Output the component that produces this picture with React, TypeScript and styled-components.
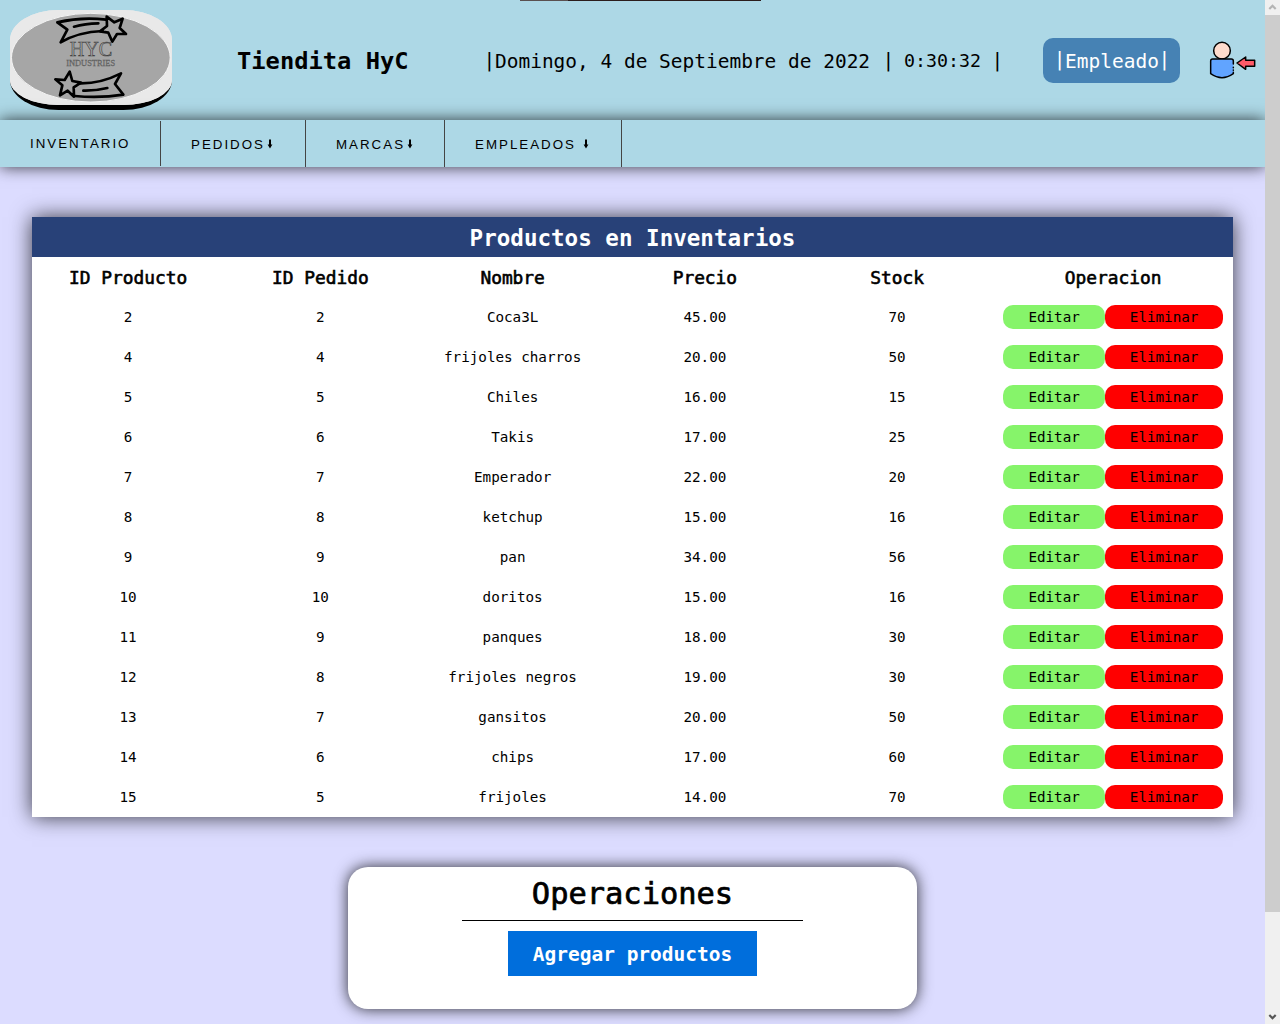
import React from "react";
import styled, { createGlobalStyle } from "styled-components";

const mono = `Consolas, "DejaVu Sans Mono", "Liberation Mono", monospace`;

const GlobalStyle = createGlobalStyle`
  * { box-sizing: border-box; }
  html, body { margin: 0; padding: 0; overflow: hidden; background: #dcdcff; }
`;

const Window = styled.div`
  display: flex;
  width: 1280px;
  height: 1024px;
  overflow: hidden;
  font-family: ${mono};
  color: #000;
`;

const Page = styled.div`
  position: relative;
  flex: 0 0 1265px;
  height: 1024px;
  overflow: hidden;
  background: #dcdcff;
`;

const TopMark = styled.div`
  position: absolute;
  top: 0;
  left: 520px;
  width: 241px;
  height: 1px;
  background: linear-gradient(90deg, #5a5050 48px, #2b1d1d 48px);
`;

const Header = styled.header`
  display: flex;
  align-items: center;
  height: 120px;
  padding: 0 10px;
  background: #add8e6;
  white-space: pre;
`;

const Logo = styled.div`
  flex: none;
  width: 162px;
  height: 100px;
  border-bottom: 5px solid #000;
  border-radius: 30%;
  overflow: hidden;
  background: #e9e9e9;

  svg { display: block; }
`;

const Brand = styled.h1`
  flex: none;
  width: 172px;
  margin: 2px 0 0 65px;
  font-size: 23.75px;
  line-height: 30px;
  font-weight: 700;
`;

const Clock = styled.div`
  flex: none;
  display: flex;
  align-items: center;
  width: 520px;
  margin: 3px 0 0 75px;
  font-size: 18.27px;
  line-height: 30px;
`;

const DateText = styled.span`
  width: 388px;
  font-size: 19.48px;
`;

const TimeText = styled.span`
  width: 98px;
  padding-left: 10px;
  margin-top: -2px;
`;

const Bar = styled.span`
  flex: none;
  width: 11px;
  margin-top: -2px;
  font-size: 19.5px;
  line-height: 30px;
  text-indent: -0.4px;
`;

const Role = styled.div`
  flex: none;
  display: flex;
  align-items: center;
  justify-content: center;
  width: 137px;
  height: 45px;
  padding: 2px 0 0 1px;
  margin-left: 39px;
  border-radius: 10px;
  background: #4682b4;
  color: #fff;
  font-size: 19.48px;
`;

const UserIcon = styled.svg`
  flex: none;
  margin-left: 29px;
`;

const Nav = styled.nav`
  position: relative;
  display: flex;
  align-items: flex-start;
  height: 47px;
  background: #add8e6;
  box-shadow: 0 0 15px rgba(0, 0, 0, 0.75);
`;

const NavItem = styled.a<{ $width: number; $short?: boolean }>`
  display: flex;
  align-items: center;
  width: ${(p) => p.$width}px;
  height: ${(p) => (p.$short ? 45 : 47)}px;
  margin-top: ${(p) => (p.$short ? 1 : 0)}px;
  padding: ${(p) => (p.$short ? 0 : 2)}px 0 0 30px;
  border-right: 1px solid #444;
  font-family: Arial, "Liberation Sans", sans-serif;
  font-size: 13.333px;
  letter-spacing: 2px;
  white-space: pre;

  svg { margin: -1px 0 0 1.5px; }
`;

const TableCard = styled.section`
  width: 1201px;
  margin: 50px 0 0 32px;
  background: #fff;
  box-shadow: 0 0 20px rgba(0, 0, 0, 0.75);
`;

const TableTitle = styled.h2`
  margin: 0;
  height: 40px;
  background: #284178;
  color: #fff;
  font-size: 22.55px;
  line-height: 42px;
  text-align: center;
`;

const Row = styled.div<{ $head?: boolean }>`
  display: grid;
  grid-template-columns: repeat(5, 192.25px) 1fr;
  align-items: center;
  justify-items: center;
  height: 40px;
  font-size: ${(p) => (p.$head ? 17.85 : 14.25)}px;
  -webkit-text-stroke: ${(p) => (p.$head ? "0.6px #000" : "0")};
`;

const Actions = styled.div`
  display: flex;
`;

const ActionButton = styled.button<{ $danger?: boolean }>`
  width: ${(p) => (p.$danger ? 118 : 102)}px;
  height: 24px;
  padding: 0;
  border: 0;
  border-radius: 10px;
  background: ${(p) => (p.$danger ? "#ff0000" : "#86f46a")};
  color: #000;
  font: inherit;
`;

const Operations = styled.section`
  display: flex;
  flex-direction: column;
  align-items: center;
  width: 569px;
  height: 142px;
  margin: 50px 0 0 348px;
  border-radius: 20px;
  background: #fff;
  box-shadow: 0 0 15px rgba(0, 0, 0, 0.8);
`;

const OperationsTitle = styled.h2`
  width: 341px;
  height: 54px;
  margin: 0 0 10px;
  border-bottom: 1px solid #000;
  font-size: 30.4px;
  font-weight: 400;
  -webkit-text-stroke: 0.7px #000;
  line-height: 53px;
  text-align: center;
`;

const AddButton = styled.button`
  width: 249px;
  height: 45px;
  padding: 2px 0 0;
  border: 0;
  background: #006edc;
  color: #fff;
  font-family: inherit;
  font-size: 19.48px;
  font-weight: 700;
`;

const Scrollbar = styled.div`
  display: flex;
  flex-direction: column;
  justify-content: space-between;
  flex: 0 0 15px;
  height: 1024px;
  background: #f0f0f0;
`;

const Thumb = styled.div`
  height: 897px;
  margin-bottom: auto;
  background: #cdcdcd;
`;

const ScrollArrow = styled.svg`
  flex: none;
  display: block;
`;

function DownArrow() {
  return (
    <svg width="6" height="10" viewBox="0 0 6 10">
      <path d="M2 0.5h2v5h1.4L3 9.5 0.6 5.5h1.4z" fill="#000" />
    </svg>
  );
}

function LogoArt() {
  return (
    <svg width="162" height="95" viewBox="30 30 486 285">
      <rect x="30" y="30" width="486" height="285" fill="#e9e9e9" />
      <ellipse cx="272.5" cy="173" rx="238" ry="133" fill="#a6a6a6" stroke="#f4f4f4" strokeWidth="3" />
      <g fill="none" stroke="#000" strokeWidth="8" strokeLinejoin="round" strokeLinecap="round">
        <path d="M320 50L343 67L368 56L359 84L378 102L351 102L337 125L325 98L300 94L321 78Z" />
        <path d="M318 59Q245 50 172 67L202 89L182 127Q235 96 308 93" />
        <path d="M222 80Q255 71 295 70" />
        <path d="M209 215L217 243L243 248L221 262L222 290L203 272L180 286L187 256L166 238L194 240Z" />
        <path d="M236 250Q300 252 363 220L345 252L370 284Q300 295 224 288" />
        <path d="M250 272Q285 273 322 264" />
      </g>
      <g fontFamily="Liberation Serif, serif" textAnchor="middle">
        <text x="273" y="169" fontSize="62" textLength="128" lengthAdjust="spacingAndGlyphs" fill="#a6a6a6" stroke="#3a3a3a" strokeWidth="1.8">HYC</text>
        <text x="272" y="198" fontSize="25" textLength="147" lengthAdjust="spacingAndGlyphs" fill="#777" stroke="#555" strokeWidth="0.8">INDUSTRIES</text>
      </g>
    </svg>
  );
}

const products: [string, string, string, string, string][] = [
  ["2", "2", "Coca3L", "45.00", "70"],
  ["4", "4", "frijoles charros", "20.00", "50"],
  ["5", "5", "Chiles", "16.00", "15"],
  ["6", "6", "Takis", "17.00", "25"],
  ["7", "7", "Emperador", "22.00", "20"],
  ["8", "8", "ketchup", "15.00", "16"],
  ["9", "9", "pan", "34.00", "56"],
  ["10", "10", "doritos", "15.00", "16"],
  ["11", "9", "panques", "18.00", "30"],
  ["12", "8", "frijoles negros", "19.00", "30"],
  ["13", "7", "gansitos", "20.00", "50"],
  ["14", "6", "chips", "17.00", "60"],
  ["15", "5", "frijoles", "14.00", "70"],
];

const columns = ["ID Producto", "ID Pedido", "Nombre", "Precio", "Stock", "Operacion"];

export default function App() {
  return (
    <>
      <GlobalStyle />
      <Window>
        <Page>
          <Header>
            <Logo><LogoArt /></Logo>
            <Brand>Tiendita HyC</Brand>
            <Clock>
              <Bar>|</Bar>
              <DateText>Domingo, 4 de Septiembre de 2022</DateText>
              <Bar>|</Bar>
              <TimeText>0:30:32</TimeText>
              <Bar>|</Bar>
            </Clock>
            <Role><Bar>|</Bar><span>Empleado</span><Bar>|</Bar></Role>
            <UserIcon width="47" height="40" viewBox="567 121 141 120">
              <g stroke="#000" strokeWidth="4.5" strokeLinejoin="round" strokeLinecap="round">
                <circle cx="606" cy="153" r="25" fill="#ffdccd" />
                <path d="M640 193V184Q640 178 634 178H578Q572 178 572 184V222Q606 246 640 222V218" fill="#61a4ff" />
                <path d="M640 203v1M640 211v1" />
                <path d="M651 190L677 172V182H704V200H677V209Z" fill="#ff5a68" />
              </g>
            </UserIcon>
          </Header>
          <Nav>
            <NavItem $width={161} $short>INVENTARIO</NavItem>
            <NavItem $width={145}>PEDIDOS<DownArrow /></NavItem>
            <NavItem $width={139}>MARCAS<DownArrow /></NavItem>
            <NavItem $width={177}>EMPLEADOS <DownArrow /></NavItem>
          </Nav>
          <TableCard>
            <TableTitle>Productos en Inventarios</TableTitle>
            <Row $head>
              {columns.map((c) => <span key={c}>{c}</span>)}
            </Row>
            {products.map((p) => (
              <Row key={p[0]}>
                {p.map((v, i) => <span key={i}>{v}</span>)}
                <Actions>
                  <ActionButton>Editar</ActionButton>
                  <ActionButton $danger>Eliminar</ActionButton>
                </Actions>
              </Row>
            ))}
          </TableCard>
          <Operations>
            <OperationsTitle>Operaciones</OperationsTitle>
            <AddButton>Agregar productos</AddButton>
          </Operations>
          <TopMark />
        </Page>
        <Scrollbar>
          <ScrollArrow width="15" height="15" viewBox="0 0 15 15">
            <path d="M4.3 9L7.5 5.8L10.7 9" fill="none" stroke="#b4b4b4" strokeWidth="2.2" />
          </ScrollArrow>
          <Thumb />
          <ScrollArrow width="15" height="15" viewBox="0 0 15 15">
            <path d="M4.3 6L7.5 9.2L10.7 6" fill="none" stroke="#555" strokeWidth="2.2" />
          </ScrollArrow>
        </Scrollbar>
      </Window>
    </>
  );
}
